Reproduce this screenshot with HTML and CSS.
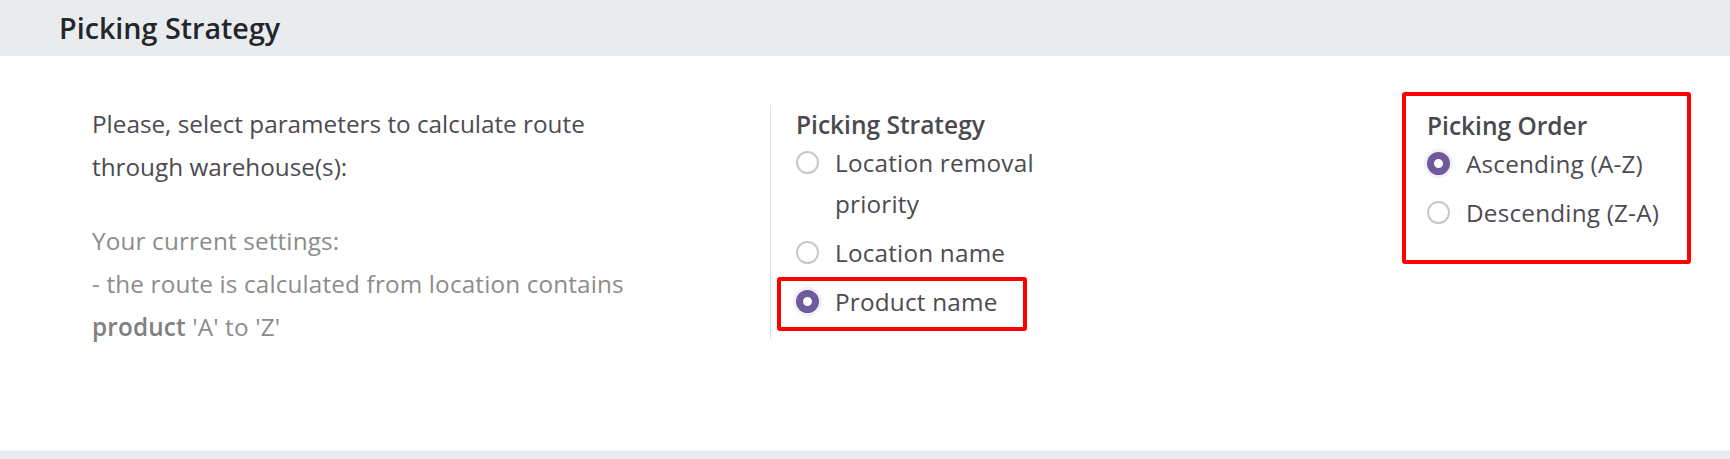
FILE: index.html
```html
<!DOCTYPE html>
<html lang="en">
<head>
<meta charset="utf-8">
<title>Picking Strategy</title>
<link rel="stylesheet" href="styles.css">
</head>
<body>
<div class="page">
  <header class="section-header">
    <h2 class="section-title">Picking Strategy</h2>
  </header>
  <main class="content">
    <div class="info-col">
      <p class="info-main">Please, select parameters to calculate route through warehouse(s):</p>
      <p class="info-muted">Your current settings:<br>- the route is calculated from location contains <b>product</b> 'A' to 'Z'</p>
    </div>
    <div class="option-col">
      <div class="field-label">Picking Strategy</div>
      <label class="radio">
        <span class="radio-dot"></span>
        <span class="radio-text">Location removal priority</span>
      </label>
      <label class="radio">
        <span class="radio-dot"></span>
        <span class="radio-text">Location name</span>
      </label>
      <label class="radio radio-marked">
        <span class="radio-dot is-checked"></span>
        <span class="radio-text">Product name</span>
      </label>
    </div>
    <div class="order-box">
      <div class="field-label">Picking Order</div>
      <label class="radio">
        <span class="radio-dot is-checked"></span>
        <span class="radio-text">Ascending (A-Z)</span>
      </label>
      <label class="radio">
        <span class="radio-dot"></span>
        <span class="radio-text">Descending (Z-A)</span>
      </label>
    </div>
  </main>
  <footer class="bottom-band"></footer>
</div>
</body>
</html>
```
FILE: styles.css
```css
* { box-sizing: border-box; }

html, body {
  margin: 0;
  padding: 0;
  background: #ffffff;
}

body {
  font-family: "Open Sans", "Noto Sans", sans-serif;
  font-size: 24.3px;
  color: #4b4b4f;
}

.page {
  display: flex;
  flex-direction: column;
  height: 100vh;
}

.section-header {
  flex: none;
  height: 56px;
  background: #e9ecef;
  display: flex;
  align-items: center;
  padding-left: 59px;
}

.section-title {
  margin: 0;
  font-size: 28.7px;
  font-weight: 600;
  color: #23262a;
  line-height: 1;
}

.content {
  flex: none;
  height: 395px;
  display: flex;
  align-items: flex-start;
  padding: 36px 0 0 92px;
  border-bottom: 1px solid #f2f4f6;
}

.info-col {
  flex: none;
  width: 678px;
  padding-top: 10px;
}

.info-col p {
  margin: 0;
  max-width: 560px;
  line-height: 43px;
}

.info-main {
  color: #4b4b50;
  margin-bottom: 31px !important;
}

.info-muted {
  color: #8c8c8c;
  letter-spacing: 0.15px;
}

.info-muted b {
  color: #808080;
  font-weight: 600;
}

.option-col {
  flex: none;
  width: 306px;
  margin-top: 13px;
  padding: 6px 0 13px 25px;
  border-left: 1px solid #dfe2e6;
}

.field-label {
  font-weight: 600;
  font-size: 24.5px;
  line-height: 27px;
  color: #4a4a4e;
}

.radio {
  display: flex;
  align-items: flex-start;
  padding: 4px 0;
  line-height: 41px;
  color: #4b4b50;
}

.radio-dot {
  flex: none;
  width: 23px;
  height: 23px;
  margin: 9px 16px 0 0;
  border-radius: 50%;
  border: 2px solid #c8c8c8;
  background: #ffffff;
}

.radio-dot.is-checked {
  border: 7.5px solid #6e5a9c;
  box-shadow: 0 0 0 3px #f2f0f7;
}

.radio-marked {
  position: relative;
}

.radio-marked::after {
  content: "";
  position: absolute;
  left: -19px;
  top: 0;
  right: 49px;
  bottom: -5px;
  border: 4px solid #ff0000;
  border-radius: 3px;
}

.radio-text {
  max-width: 240px;
  letter-spacing: 0.2px;
}

.order-box {
  flex: none;
  width: 289px;
  margin-left: 326px;
  padding: 16px 0 23px 21px;
  border: 4px solid #ff0000;
  border-radius: 3px;
}

.bottom-band {
  flex: 1;
  background: #e9ecef;
}
```
